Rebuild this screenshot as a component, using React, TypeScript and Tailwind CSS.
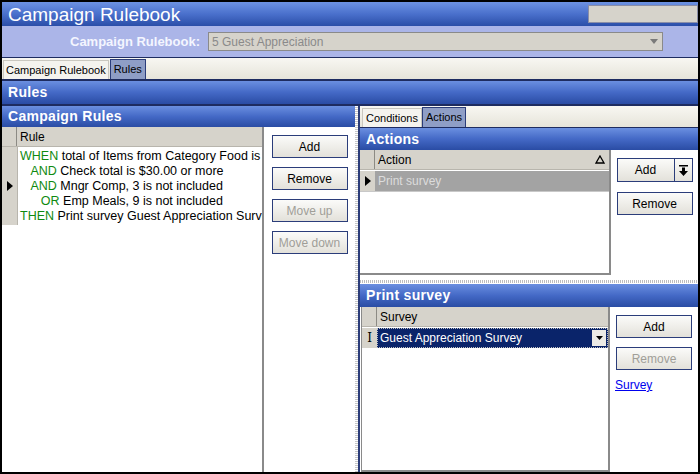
import React from 'react';

const font = { fontFamily: '"Liberation Sans", Arial, sans-serif' };

const Header: React.FC<{ title: string; className?: string }> = ({ title, className = '' }) => (
  <div
    className={`flex items-center pl-[6px] bg-gradient-to-b from-[#6b8fe0] via-[#4469c6] to-[#2a4ca4] text-white font-bold text-[14px] tracking-[0.3px] ${className}`}
  >
    {title}
  </div>
);

const Btn: React.FC<{ label: string; disabled?: boolean; className?: string }> = ({ label, disabled, className = '' }) => (
  <div
    className={`flex items-center justify-center w-[76px] h-[23px] border border-[#2b3d7a] bg-gradient-to-b from-[#fbfbf9] to-[#e3e1da] text-[12px] ${
      disabled ? 'text-[#a09e98]' : 'text-black'
    } ${className}`}
  >
    {label}
  </div>
);

const Tri: React.FC = () => (
  <svg width="6" height="10" viewBox="0 0 6 10">
    <path d="M0 0 L6 5 L0 10 Z" fill="#000" />
  </svg>
);

const GridHeader: React.FC<{ label: string; sort?: boolean }> = ({ label, sort }) => (
  <div className="flex h-[20px] bg-[#d6d3cb] border-b border-[#b8b5ad] text-[12px]">
    <div className="w-[15px] border-r border-[#8c8a84]" />
    <div className="flex-1 flex items-center pl-[3px]">{label}</div>
    {sort && (
      <svg width="10" height="9" viewBox="0 0 10 9" className="mr-[4px] mt-[5px]">
        <path d="M5 1 L9 8 L1 8 Z" fill="none" stroke="#000" strokeWidth="1.3" />
      </svg>
    )}
  </div>
);

export default function App() {
  const rules: [string, string, string][] = [
    ['', 'WHEN', ' total of Items from Category Food is'],
    ['\u00a0\u00a0\u00a0', 'AND', ' Check total is $30.00 or more'],
    ['\u00a0\u00a0\u00a0', 'AND', ' Mngr Comp, 3 is not included'],
    ['\u00a0\u00a0\u00a0\u00a0\u00a0\u00a0', 'OR', ' Emp Meals, 9 is not included'],
    ['', 'THEN', ' Print survey Guest Appreciation Survey'],
  ];

  return (
    <div style={font} className="w-[700px] h-[474px] bg-black p-[2px] flex flex-col overflow-hidden">
      {/* title bar */}
      <div className="h-[24px] flex items-center justify-between bg-gradient-to-b from-[#6d92e2] via-[#4a70cc] to-[#2b4ea8]">
        <span className="pl-[6px] text-white text-[19px] leading-none">Campaign Rulebook</span>
        <div className="w-[110px] h-[18px] bg-[#d6d3cb] border border-[#8a8ea8]" />
      </div>

      {/* rulebook selector */}
      <div className="h-[32px] bg-[#abb5e8] flex items-center border-b border-[#1e2c60]">
        <span className="ml-[68px] w-[134px] text-[13px] font-bold text-[#f4f6ff]">Campaign Rulebook:</span>
        <div className="ml-[4px] w-[455px] h-[19px] bg-[#d6d3cb] border border-[#8a8a8a] flex items-center justify-between px-[3px] text-[12px] text-[#8a8a8a]">
          <span>5 Guest Appreciation</span>
          <svg width="8" height="5" viewBox="0 0 8 5" className="mr-[1px]">
            <path d="M0 0 L8 0 L4 5 Z" fill="#7a7a7a" />
          </svg>
        </div>
      </div>

      {/* top tabs */}
      <div className="h-[23px] bg-gradient-to-b from-[#f8f7f2] to-[#e6e4da] flex items-end pl-[1px] border-b-2 border-[#1e2c60] text-[11px]">
        <div className="h-[19px] px-[2px] flex items-center border border-b-0 border-[#c9c7bf] bg-[#f4f3ee]">Campaign Rulebook</div>
        <div className="h-[20px] px-[3px] ml-[1px] flex items-center border border-b-0 border-[#2b3d7a] bg-[#8f9ec6]">Rules</div>
      </div>

      <Header title="Rules" className="h-[25px] border-b-2 border-[#1e2c60]" />

      {/* main */}
      <div className="flex-1 flex min-h-0">
        {/* left panel */}
        <div className="w-[353px] flex flex-col">
          <Header title="Campaign Rules" className="h-[21px]" />
          <div className="flex-1 flex bg-white">
            <div className="w-[262px] border-r-2 border-[#8a8a8a] flex flex-col">
              <GridHeader label="Rule" />
              <div className="flex text-[12.5px] leading-[15px]">
                <div className="w-[16px] bg-[#d6d3cb] border-r border-[#b8b5ad] flex items-center justify-center">
                  <Tri />
                </div>
                <div className="pl-[2px] pt-[2px] pb-[1px] whitespace-nowrap overflow-hidden flex-1">
                  {rules.map(([pad, kw, rest], i) => (
                    <div key={i}>
                      {pad}
                      <span className="text-[#0f8a10]">{kw}</span>
                      {rest}
                    </div>
                  ))}
                </div>
              </div>
            </div>
            <div className="flex-1 flex flex-col items-center pt-[8px] gap-[9px]">
              <Btn label="Add" />
              <Btn label="Remove" />
              <Btn label="Move up" disabled />
              <Btn label="Move down" disabled />
            </div>
          </div>
        </div>

        {/* splitter */}
        <div className="w-[3px] bg-[repeating-linear-gradient(0deg,#c8c8c8_0px,#c8c8c8_1px,#ffffff_1px,#ffffff_2px)]" />

        {/* right panel */}
        <div className="flex-1 flex flex-col border-l-2 border-[#2b3d7a]">
          <div className="h-[22px] bg-gradient-to-b from-[#f8f7f2] to-[#e6e4da] flex items-end pl-[2px] text-[11px] border-b border-[#1e2c60]">
            <div className="h-[19px] px-[3px] flex items-center border border-b-0 border-[#c9c7bf] bg-[#f4f3ee]">Conditions</div>
            <div className="h-[20px] px-[3px] flex items-center border border-b-0 border-[#2b3d7a] bg-[#8f9ec6]">Actions</div>
          </div>
          <Header title="Actions" className="h-[22px]" />
          <div className="h-[128px] flex bg-white">
            <div className="w-[251px] h-[125px] border-r-2 border-b-2 border-[#8a8a8a] flex flex-col">
              <GridHeader label="Action" sort />
              <div className="flex h-[21px] mt-[1px] border-b border-[#c8c8c8]">
                <div className="w-[15px] bg-[#d6d3cb] flex items-center justify-center">
                  <Tri />
                </div>
                <div className="flex-1 bg-[#a3a3a3] flex items-center pl-[3px] text-[12px] text-[#dcdcdc]">Print survey</div>
              </div>
            </div>
            <div className="flex-1 flex flex-col items-center pt-[8px] gap-[10px]">
              <div className="flex w-[76px] h-[24px] border border-[#2b3d7a] bg-gradient-to-b from-[#fbfbf9] to-[#e3e1da] text-[12px]">
                <div className="flex-1 flex items-center justify-center border-r border-[#2b3d7a]">Add</div>
                <div className="w-[17px] flex items-center justify-center">
                  <svg width="9" height="11" viewBox="0 0 9 11">
                    <rect x="0" y="0" width="9" height="1.5" fill="#000" />
                    <path d="M3 2.5 H6 V6 H9 L4.5 11 L0 6 H3 Z" fill="#000" />
                  </svg>
                </div>
              </div>
              <Btn label="Remove" />
            </div>
          </div>

          {/* horizontal splitter */}
          <div className="h-[6px] bg-white flex items-center">
            <div className="w-full h-[3px] bg-[repeating-linear-gradient(90deg,#bdbdbd_0px,#bdbdbd_1px,#ffffff_1px,#ffffff_2px)]" />
          </div>

          <Header title="Print survey" className="h-[23px]" />
          <div className="flex-1 flex bg-white">
            <div className="w-[249px] ml-[1px] border-r-2 border-b-2 border-l border-[#8a8a8a] flex flex-col">
              <GridHeader label="Survey" />
              <div className="flex h-[20px] mt-[1px]">
                <div className="w-[15px] bg-[#d6d3cb] flex items-center justify-center text-[12px] font-[DejaVu_Serif]">I</div>
                <div className="flex-1 bg-[#0a246a] border border-dotted border-[#c0c0c0] flex items-center justify-between pl-[2px] text-[12px] text-white">
                  <span>Guest Appreciation Survey</span>
                  <div className="w-[14px] h-[16px] mr-[1px] bg-[#ecebe6] flex items-center justify-center">
                    <svg width="7" height="4" viewBox="0 0 7 4">
                      <path d="M0 0 L7 0 L3.5 4 Z" fill="#000" />
                    </svg>
                  </div>
                </div>
              </div>
            </div>
            <div className="flex-1 flex flex-col pl-[5px] pt-[8px]">
              <Btn label="Add" className="ml-[1px]" />
              <Btn label="Remove" disabled className="ml-[1px] mt-[9px]" />
              <a className="mt-[6px] text-[12px] text-[#0000ee] underline">Survey</a>
            </div>
          </div>
        </div>
      </div>
    </div>
  );
}
